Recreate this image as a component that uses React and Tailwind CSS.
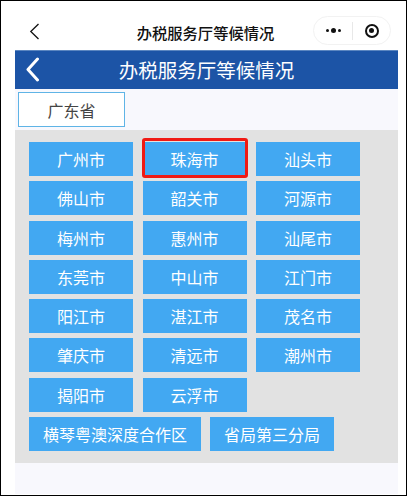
import { ChevronLeft } from "lucide-react";

const cities = [
  "广州市", "珠海市", "汕头市",
  "佛山市", "韶关市", "河源市",
  "梅州市", "惠州市", "汕尾市",
  "东莞市", "中山市", "江门市",
  "阳江市", "湛江市", "茂名市",
  "肇庆市", "清远市", "潮州市",
  "揭阳市", "云浮市",
];

const font = "font-['Noto_Sans_CJK_SC','Noto_Sans',sans-serif]";

function CityButton({ name, selected }) {
  return (
    <div className="relative flex h-[34px] w-[104px] items-center justify-center bg-[#42a8f2] text-[16px] text-white">
      {name}
      {selected && (
        <div className="absolute -top-[4px] -right-[1px] -bottom-[2px] -left-[1px] rounded-[3px] border-[3px] border-[#f01a14]"></div>
      )}
    </div>
  );
}

export default function App() {
  return (
    <div className={`${font} flex h-[496px] w-[407px] flex-col border border-black bg-white pr-[8px] pl-[14px] pb-[1px]`}>
      {/* WeChat title bar */}
      <div className="relative -ml-[14px] flex h-[49px] shrink-0 items-center justify-center pt-[13px] pl-[12px] text-[15.3px] font-medium text-[#111]">
        <svg className="absolute left-[28px] top-[22px] h-[17px] w-[11px]" viewBox="0 0 11 17" fill="none">
          <path d="M9.5 1 L1.8 8.5 L9.5 16" stroke="#111" strokeWidth="1.3" />
        </svg>
        办税服务厅等候情况
        <div className="absolute top-[15px] right-[7px] flex h-[29px] w-[78px] items-center rounded-full border border-[#f2f2f2]">
          <div className="flex w-[38px] items-center justify-center gap-[2px] pl-[1px]">
            <span className="h-[3px] w-[3px] rounded-full bg-[#111]"></span>
            <span className="h-[5px] w-[5px] rounded-full bg-[#111]"></span>
            <span className="h-[3px] w-[3px] rounded-full bg-[#111]"></span>
          </div>
          <div className="h-[18px] w-px bg-[#e8e8e8]"></div>
          <div className="flex flex-1 items-center justify-center">
            <div className="flex h-[14px] w-[14px] items-center justify-center rounded-full border-2 border-[#111]">
              <span className="h-[5px] w-[5px] rounded-full bg-[#111]"></span>
            </div>
          </div>
        </div>
      </div>

      <div className="flex flex-1 flex-col bg-[#f8f8fd]">
        {/* Blue header */}
        <div className="relative flex h-[39px] shrink-0 items-center justify-center border-t border-[#5b86c0] bg-[#1c54a6] text-[19.5px] text-white">
          <svg className="absolute left-[10px] top-[6px] h-[25px] w-[15px]" viewBox="0 0 15 25" fill="none">
            <path d="M12.5 2 L3 12.5 L12.5 23" stroke="white" strokeWidth="3" strokeLinecap="round" strokeLinejoin="round" />
          </svg>
          办税服务厅等候情况
        </div>

        {/* Province tab */}
        <div className="flex h-[41px] shrink-0 pt-[3px] pl-[3px]">
          <div className="flex h-[35px] w-[107px] items-center justify-center border border-[#5fb4e6] bg-white text-[16px] text-[#444]">
            广东省
          </div>
        </div>

        {/* City grid */}
        <div className="flex flex-col gap-[5.3px] bg-[#e2e2e2] pt-[12px] pr-[24px] pb-[12px] pl-[14px]">
          <div className="grid grid-cols-[104px_104px_104px] gap-x-[9.5px] gap-y-[5.3px]">
            {cities.map((c) => (
              <CityButton key={c} name={c} selected={c === "珠海市"} />
            ))}
          </div>
          <div className="flex gap-[9px] text-[16px] text-white">
            <div className="flex h-[34px] w-[172px] items-center justify-center bg-[#42a8f2]">横琴粤澳深度合作区</div>
            <div className="flex h-[34px] w-[124px] items-center justify-center bg-[#42a8f2]">省局第三分局</div>
          </div>
        </div>
      </div>
    </div>
  );
}
